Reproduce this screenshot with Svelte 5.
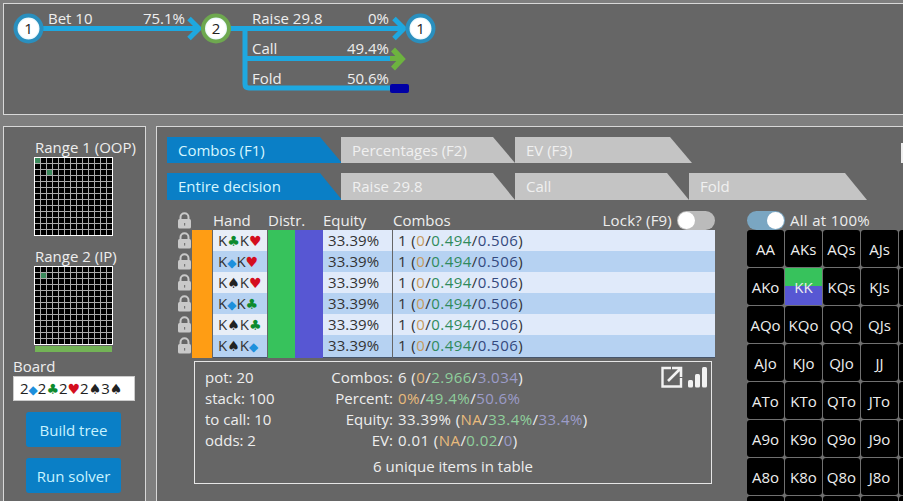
<script>
  const ranks = ['A', 'K', 'Q', 'J', 'T', '9', '8', '7', '6', '5', '4', '3', '2'];
  const idx = [...Array(13).keys()];
  // only this much of the hand matrix fits in the window
  const matrixRows = [...Array(8).keys()];
  const matrixCols = [...Array(5).keys()];

  const tabs1 = [
    { label: 'Combos (F1)', active: true, cls: 'w175' },
    { label: 'Percentages (F2)', cls: '' },
    { label: 'EV (F3)', cls: 'w177' }
  ];
  const tabs2 = [
    { label: 'Entire decision', active: true, cls: 'w175' },
    { label: 'Raise 29.8', cls: '' },
    { label: 'Call', cls: '' },
    { label: 'Fold', cls: 'w178' }
  ];

  const hands = [
    [['K', 'c'], ['K', 'h']],
    [['K', 'd'], ['K', 'h']],
    [['K', 's'], ['K', 'h']],
    [['K', 'd'], ['K', 'c']],
    [['K', 's'], ['K', 'c']],
    [['K', 's'], ['K', 'd']]
  ];
  const suit = { c: '♣', d: '◆', h: '♥', s: '♠' };
  const board = [['2', 'd'], ['2', 'c'], ['2', 'h'], ['2', 's'], ['3', 's']];

  function handName(r, c) {
    if (r === 7 || c === 4) return '';
    if (r === c) return ranks[r] + ranks[c];
    return r < c ? ranks[r] + ranks[c] + 's' : ranks[c] + ranks[r] + 'o';
  }
</script>

{#snippet lock()}
  <svg class="lock" viewBox="0 0 15 17" width="15" height="17">
    <path d="M3.5 8V5.2a4 4 0 0 1 8 0V8" fill="none" stroke="#c9c9c9" stroke-width="2" />
    <rect x="1" y="7" width="13" height="9.5" rx="1.5" fill="#c9c9c9" />
    <rect x="7" y="11" width="1.2" height="2.6" fill="#777" />
  </svg>
{/snippet}

{#snippet card(cards)}
  {#each cards as [rank, s]}{rank}<span class="suit {s}">{suit[s]}</span>{/each}
{/snippet}

{#snippet mini(marks)}
  <div class="mini">
    {#each idx as r}
      {#each idx as c}
        <span class:on={marks.includes(r * 13 + c)}></span>
      {/each}
    {/each}
  </div>
{/snippet}

{#snippet node(x, label, ring)}
  <circle cx={x} cy="28.5" r="13" fill="url(#nodeFill)" stroke={ring} stroke-width="4" />
  <text x={x} y="34" class="nodeText">{label}</text>
{/snippet}

<div class="page">
  <section class="panel tree">
    <svg width="900" height="110" viewBox="3 3 900 110">
      <defs>
        <radialGradient id="nodeFill">
          <stop offset="0.7" stop-color="#fff" />
          <stop offset="1" stop-color="#c5ecf7" />
        </radialGradient>
      </defs>
      <g fill="none" stroke="#1ea8e0" stroke-width="5">
        <path d="M40 28.5H199M189 18.5l10 10-10 10" />
        <path d="M228 28.5H404M394 18.5l10 10-10 10" />
        <path d="M245 28.5V84q0 4 4 4H392" />
        <path d="M245 58.5H392" />
      </g>
      <path d="M393 49.5l9 9.5-9 9.5" fill="none" stroke="#6db33f" stroke-width="5.5" />
      <path d="M390 58.5H400" stroke="#6db33f" stroke-width="5" />
      <rect x="390" y="84" width="19" height="9" rx="2" fill="#0000a6" />
      {@render node(28.5, '1', '#2a8fbe')}
      {@render node(216, '2', '#6ea84f')}
      {@render node(420.5, '1', '#2a8fbe')}
      <text x="48" y="24">Bet 10</text>
      <text x="185" y="24" class="end">75.1%</text>
      <text x="252" y="24">Raise 29.8</text>
      <text x="389" y="24" class="end">0%</text>
      <text x="252" y="54">Call</text>
      <text x="389" y="54" class="end">49.4%</text>
      <text x="252" y="84">Fold</text>
      <text x="389" y="84" class="end">50.6%</text>
    </svg>
  </section>

  <div class="lower">
    <aside class="panel side">
      <div class="rangeLabel">Range 1 (OOP)</div>
      {@render mini([0, 28])}
      <div class="rangeLabel second">Range 2 (IP)</div>
      {@render mini([14])}
      <div class="greenBar"></div>
      <div class="boardLabel">Board</div>
      <div class="board">{@render card(board)}</div>
      <button>Build tree</button>
      <button>Run solver</button>
    </aside>

    <main class="panel content">
      <div class="tabs">
        {#each tabs1 as t}
          <div class="tab {t.cls}" class:active={t.active}>{t.label}</div>
        {/each}
        <div class="stub"></div>
      </div>
      <div class="tabs two">
        {#each tabs2 as t}
          <div class="tab {t.cls}" class:active={t.active}>{t.label}</div>
        {/each}
      </div>

      <div class="columns">
        <div class="left">
          <div class="head">
            <div class="lockCell">{@render lock()}</div>
            <div class="hHand">Hand</div>
            <div class="hDistr">Distr.</div>
            <div class="hEquity">Equity</div>
            <div class="hCombos">Combos</div>
            <span class="lockLabel">Lock? (F9)</span>
            <span class="toggle off"><i></i></span>
          </div>
          {#each hands as h, i}
            <div class="row" class:alt={i % 2 === 1}>
              <div class="lockCell">{@render lock()}</div>
              <div class="orange"></div>
              <div class="cell hand">{@render card(h)}</div>
              <div class="green"></div>
              <div class="violet"></div>
              <div class="cell equity">33.39%</div>
              <div class="cell combos">1 (<span class="o">0</span>/<span class="g">0.494</span>/<span class="b">0.506</span>)</div>
            </div>
          {/each}

          <div class="info">
            <div class="stats">
              <div>pot: 20</div><div class="k">Combos:</div>
              <div class="v">6 (<span class="o">0</span>/<span class="g">2.966</span>/<span class="b">3.034</span>)</div>
              <div>stack: 100</div><div class="k">Percent:</div>
              <div class="v"><span class="o">0%</span>/<span class="g">49.4%</span>/<span class="b">50.6%</span></div>
              <div>to call: 10</div><div class="k">Equity:</div>
              <div class="v">33.39% (<span class="o">NA</span>/<span class="g">33.4%</span>/<span class="b">33.4%</span>)</div>
              <div>odds: 2</div><div class="k">EV:</div>
              <div class="v">0.01 (<span class="o">NA</span>/<span class="g">0.02</span>/<span class="b">0</span>)</div>
            </div>
            <div class="unique">6 unique items in table</div>
            <svg class="infoIcons" width="48" height="22" viewBox="0 0 48 22">
              <path d="M10 2H1.5V20.5H20V12" fill="none" stroke="#f2f2f2" stroke-width="2.4" />
              <path d="M7 15L19 3M11 2H20V11" fill="none" stroke="#f2f2f2" stroke-width="2.6" />
              <rect x="27" y="14" width="5" height="7.5" rx="1.5" fill="#f2f2f2" />
              <rect x="34" y="8" width="5" height="13.5" rx="1.5" fill="#f2f2f2" />
              <rect x="41" y="1" width="5" height="20.5" rx="1.5" fill="#f2f2f2" />
            </svg>
          </div>
        </div>

        <div class="right">
          <div class="allRow">
            <span class="toggle on"><i></i></span>
            <span class="allLabel">All at 100%</span>
          </div>
          <div class="matrix">
            {#each matrixRows as r}
              {#each matrixCols as c}
                <div class="hcell" class:kk={r === 1 && c === 1}>{handName(r, c)}</div>
              {/each}
            {/each}
          </div>
        </div>
      </div>
    </main>
  </div>
</div>

<style>
  :global(body) { overflow: hidden; background: #7f7f7f; }
  .page {
    width: 903px;
    height: 501px;
    overflow: hidden;
    box-sizing: border-box;
    padding: 3px 0 0 3px;
    background: #7f7f7f;
    font-family: "Open Sans", "Noto Sans", sans-serif;
    font-size: 15px;
    color: #eee;
  }
  .panel { background: #666; border: 1px solid #d8d8d8; box-sizing: border-box; }
  .tree { height: 112px; width: 910px; overflow: hidden; }
  .tree svg { display: block; margin: -1px 0 0 -1px; }
  .tree text { fill: #eee; font-size: 15px; }
  .tree text.end { text-anchor: end; }
  .tree text.nodeText { fill: #222; text-anchor: middle; font-size: 15px; }

  .lower { display: flex; gap: 10px; margin-top: 11px; }
  .side {
    width: 143px;
    height: 400px;
    flex: none;
    padding: 11px 0 0 9px;
    display: flex;
    flex-direction: column;
  }
  .rangeLabel { margin-left: 22px; line-height: 19px; height: 19px; white-space: nowrap; }
  .rangeLabel.second { margin-top: 11px; }
  .mini {
    width: 79px;
    height: 79px;
    box-sizing: border-box;
    margin-left: 21px;
    border: 1px solid #fff;
    background: #aaa;
    display: grid;
    grid-template-columns: repeat(13, 5px);
    grid-auto-rows: 5px;
    gap: 1px;
  }
  .mini span { background: #000; }
  .mini span.on { background: #3b8a5c; }
  .greenBar { width: 77px; height: 6px; margin: 1px 0 0 22px; background: #73b356; }
  .boardLabel { margin-top: 5px; line-height: 19px; }
  .board {
    width: 122px;
    height: 25px;
    box-sizing: border-box;
    padding-left: 6px;
    background: #fff;
    border: 1px solid #ccc;
    color: #222;
    line-height: 23px;
    white-space: nowrap;
  }
  .suit { font-family: "DejaVu Sans", sans-serif; font-size: 14px; }
  .suit.c { color: #0c8a2e; }
  .suit.d { color: #1e90dc; font-size: 12px; }
  .suit.h { color: #d40e1e; }
  .suit.s { color: #222; }
  button {
    width: 95px;
    height: 35px;
    margin: 11px 0 0 13px;
    border: none;
    border-radius: 3px;
    background: #0a7fc6;
    color: #c9f3ff;
    font: inherit;
    padding: 0;
  }

  .content { width: 760px; height: 400px; flex: none; padding: 10px 0 0 10px; overflow: hidden; }
  .tabs { display: flex; height: 26px; position: relative; }
  .tabs.two { height: 27px; margin-top: 10px; }
  .tab {
    width: 174px;
    flex: none;
    box-sizing: border-box;
    padding-left: 11px;
    line-height: 26px;
    background: #c4c4c4;
    color: #f0f0f0;
    clip-path: polygon(0 0, calc(100% - 22px) 0, 100% 100%, 0 100%);
  }
  .tab.w175 { width: 175px; margin-right: -1px; }
  .tab.w177 { width: 177px; }
  .tab.w178 { width: 178px; }
  .tab.active { background: #0a7fc6; color: #d5f6ff; }
  .stub { position: absolute; left: 734px; top: 6px; width: 4px; height: 20px; background: #eee; }

  .columns { display: flex; gap: 32px; margin-top: 10px; margin-left: 10px; }
  .left { width: 538px; flex: none; }
  .head { display: flex; align-items: center; height: 20px; white-space: nowrap; }
  .head .lockCell { width: 15px; padding-top: 0; }
  .hHand { margin-left: 21px; width: 55px; }
  .hDistr { width: 55px; }
  .hEquity { width: 70px; }
  .lockLabel { margin-left: auto; margin-right: 5px; letter-spacing: 0.2px; }
  .row {
    display: grid;
    grid-template-columns: 15px 21px 55px 27px 28px 70px 322px;
    height: 21px;
  }
  .lockCell { line-height: 0; padding-top: 2px; }
  .orange { background: #ff9d14; width: 20px; }
  .green { background: #37c25c; }
  .violet { background: #5757d3; }
  .cell {
    box-sizing: border-box;
    background: #e0eafa;
    color: #333;
    border-bottom: 1px solid #47566c;
    line-height: 20px;
    padding-left: 5px;
    white-space: nowrap;
    margin-right: 1px;
  }
  .cell.combos { margin-right: 0; letter-spacing: 0.45px; }
  .cell.equity { letter-spacing: 0.1px; }
  .hand { background: #e8eef7; }
  .alt .cell { background: #b6d2f2; }
  .cell .o { color: #c79a5e; }
  .cell .g { color: #2f8a5c; }
  .cell .b { color: #34497e; }

  .toggle {
    display: inline-block;
    flex: none;
    position: relative;
    width: 38px;
    height: 19px;
    border-radius: 10px;
    background: #bbb;
  }
  .toggle i {
    position: absolute;
    top: 1px;
    left: 1px;
    width: 17px;
    height: 17px;
    border-radius: 50%;
    background: #fff;
  }
  .toggle.on { background: #7aa6c2; }
  .toggle.on i { left: auto; right: 1px; }

  .info {
    position: relative;
    box-sizing: border-box;
    width: 518px;
    height: 123px;
    margin: 5px 0 0 17px;
    padding: 5px 0 0 10px;
    border: 1px solid #e6e6e6;
  }
  .stats {
    display: grid;
    grid-template-columns: 100px 88px auto;
    line-height: 21px;
  }
  .k { text-align: right; }
  .v { margin-left: 5px; letter-spacing: 0.45px; white-space: nowrap; }
  .stats .o { color: #e9bb7c; }
  .stats .g { color: #8fcf9c; }
  .stats .b { color: #9c9cc9; }
  .unique { margin: 5px 0 0 -10px; text-align: center; line-height: 21px; }
  .infoIcons { position: absolute; top: 4px; right: 2px; }

  .right { width: 160px; flex: none; }
  .allRow { display: flex; align-items: center; gap: 5px; height: 20px; white-space: nowrap; }
  .allLabel { letter-spacing: 0.3px; }
  .matrix {
    display: grid;
    grid-template-columns: repeat(5, 37px);
    grid-auto-rows: 37px;
    gap: 1px;
    width: 156px;
    background: #707070;
    overflow: hidden;
    height: 271px;
  }
  .hcell {
    background: #000;
    border-radius: 3px;
    display: flex;
    align-items: center;
    justify-content: center;
    color: #eee;
    white-space: nowrap;
  }
  .hcell.kk { background: linear-gradient(#37c25c 50%, #5757d3 50%); border-radius: 0; }
</style>
